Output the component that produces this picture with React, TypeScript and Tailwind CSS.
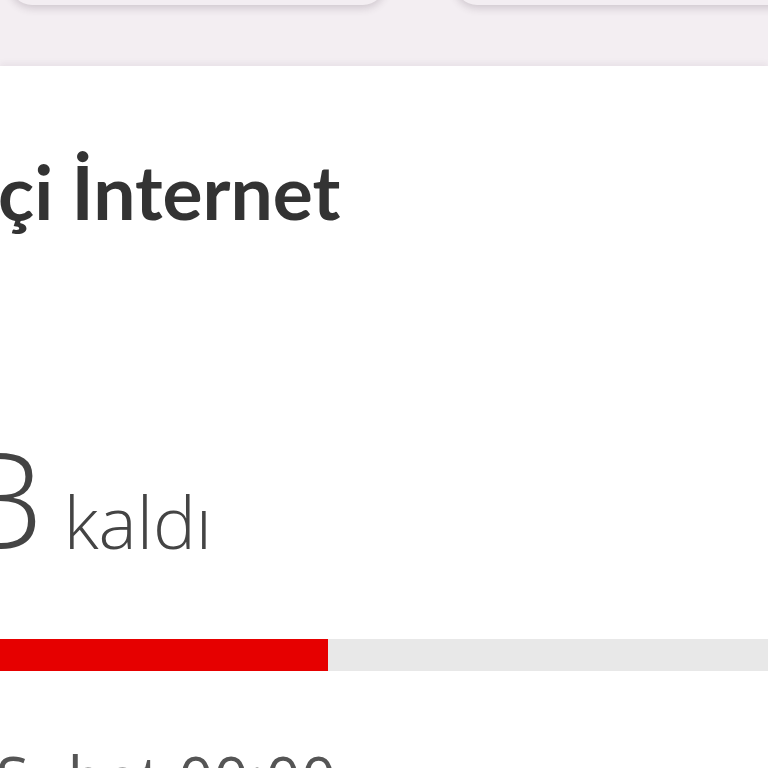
export default function App() {
  return (
    <div className="flex h-[768px] w-[768px] flex-col overflow-hidden bg-[#f3eef2] font-['Open_Sans',sans-serif]">
      {/* Top tiles (only their lower edge is visible) */}
      <div className="flex h-[66px] shrink-0 gap-[70px] pl-[10px]">
        <div className="-mt-[40px] h-[45px] w-[375px] rounded-b-[22px] bg-[#f3eef2] shadow-[0_3px_8px_rgba(60,40,60,0.2)]" />
        <div className="-mt-[40px] h-[45px] flex-1 -mr-[30px] rounded-b-[22px] bg-[#f3eef2] shadow-[0_3px_8px_rgba(60,40,60,0.2)]" />
      </div>

      {/* Usage card */}
      <div className="flex flex-1 flex-col bg-white shadow-[0_-3px_6px_rgba(60,40,60,0.06)]">
        <h2 className="mt-[88px] -ml-[2px] font-['Lato',sans-serif] text-[75px] font-bold leading-none text-[#333333]">
          çi İnternet
        </h2>

        <div className="mt-[201px] flex items-baseline gap-[21px] text-[#444444]">
          <span className="-ml-[42px] text-[135px] font-light leading-none">B</span>
          <span className="text-[72px] font-light leading-none">kaldı</span>
        </div>

        <div className="mt-[74px] flex h-[32px] w-full shrink-0 bg-[#e8e8e8]">
          <div className="h-full w-[328px] bg-[#e60000]" />
        </div>

        <p className="mt-[76px] -ml-[4px] text-[60px] leading-none tracking-[1px] text-[#555555]">Şubat 00:00</p>
      </div>
    </div>
  );
}
